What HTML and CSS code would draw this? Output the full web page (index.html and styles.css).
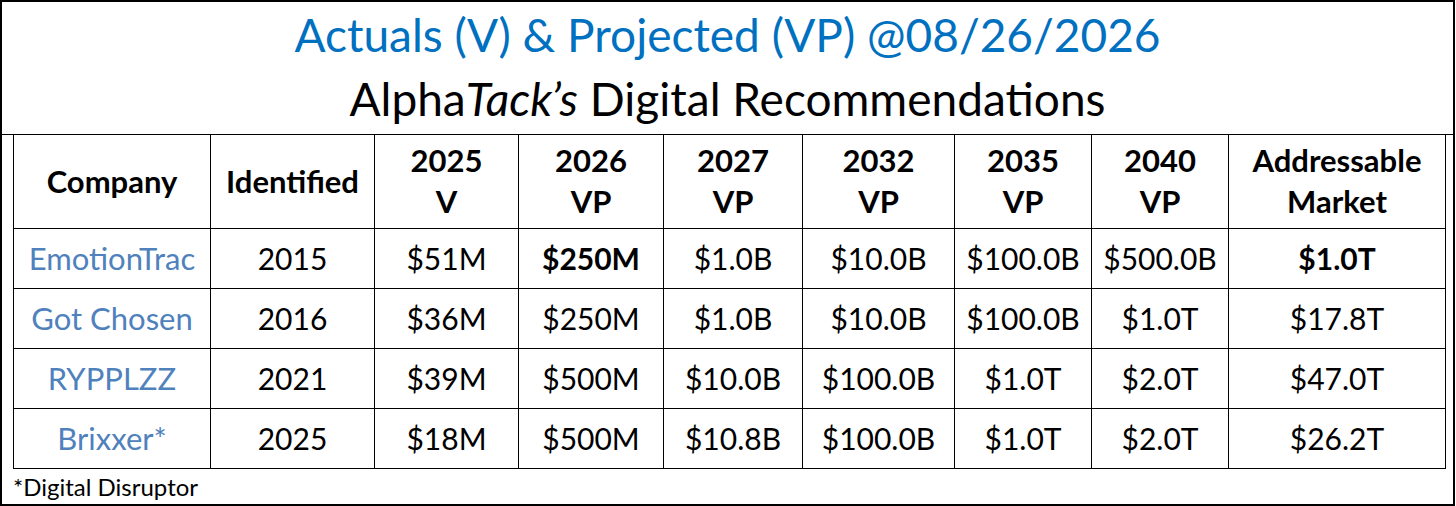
FILE: index.html
```html
<!DOCTYPE html>
<html lang="en">
<head>
<meta charset="utf-8">
<title>AlphaTack's Digital Recommendations</title>
<link rel="stylesheet" href="styles.css">
</head>
<body>
<div class="sheet">
  <header class="heading">
    <div class="title">Actuals (V) &amp; Projected (VP) @08/26/2026</div>
    <div class="subtitle">Alpha<em>Tack’s</em> Digital Recommendations</div>
  </header>
  <table class="grid">
    <colgroup>
      <col class="c-company">
      <col class="c-ident">
      <col class="c-2025">
      <col class="c-2026">
      <col class="c-2027">
      <col class="c-2032">
      <col class="c-2035">
      <col class="c-2040">
      <col class="c-market">
    </colgroup>
    <thead>
      <tr class="head-row">
        <th>Company</th>
        <th>Identified</th>
        <th>2025<br>V</th>
        <th>2026<br>VP</th>
        <th>2027<br>VP</th>
        <th>2032<br>VP</th>
        <th>2035<br>VP</th>
        <th>2040<br>VP</th>
        <th>Addressable<br>Market</th>
      </tr>
    </thead>
    <tbody>
      <tr>
        <td class="co">EmotionTrac</td>
        <td>2015</td>
        <td>$51M</td>
        <td class="strong">$250M</td>
        <td>$1.0B</td>
        <td>$10.0B</td>
        <td>$100.0B</td>
        <td>$500.0B</td>
        <td class="strong">$1.0T</td>
      </tr>
      <tr>
        <td class="co">Got Chosen</td>
        <td>2016</td>
        <td>$36M</td>
        <td>$250M</td>
        <td>$1.0B</td>
        <td>$10.0B</td>
        <td>$100.0B</td>
        <td>$1.0T</td>
        <td>$17.8T</td>
      </tr>
      <tr>
        <td class="co">RYPPLZZ</td>
        <td>2021</td>
        <td>$39M</td>
        <td>$500M</td>
        <td>$10.0B</td>
        <td>$100.0B</td>
        <td>$1.0T</td>
        <td>$2.0T</td>
        <td>$47.0T</td>
      </tr>
      <tr>
        <td class="co">Brixxer*</td>
        <td>2025</td>
        <td>$18M</td>
        <td>$500M</td>
        <td>$10.8B</td>
        <td>$100.0B</td>
        <td>$1.0T</td>
        <td>$2.0T</td>
        <td>$26.2T</td>
      </tr>
    </tbody>
  </table>
  <footer class="note">*Digital Disruptor</footer>
</div>
</body>
</html>
```
FILE: styles.css
```css
html, body {
  margin: 0;
  padding: 0;
  background: #ffffff;
}

body {
  font-family: "Lato", "Open Sans", sans-serif;
  color: #000000;
}

.sheet {
  box-sizing: border-box;
  width: 1455px;
  height: 506px;
  border: 2px solid #000000;
  display: flex;
  flex-direction: column;
}

.heading {
  box-sizing: border-box;
  height: 133px;
  border-bottom: 1px solid #000000;
  padding-top: 1px;
  text-align: center;
  font-size: 46px;
  line-height: 64px;
}

.title {
  color: #0070c0;
}

.subtitle {
  color: #000000;
}

.subtitle em {
  font-style: italic;
}

.grid {
  margin-left: 11px;
  width: 1432px;
  table-layout: fixed;
  border-collapse: collapse;
  font-size: 30px;
}

.c-company { width: 197px; }
.c-ident { width: 164px; }
.c-2025 { width: 144px; }
.c-2026 { width: 145px; }
.c-2027 { width: 139px; }
.c-2032 { width: 152px; }
.c-2035 { width: 137px; }
.c-2040 { width: 137px; }
.c-market { width: 217px; }

.grid th,
.grid td {
  border: 1px solid #000000;
  padding: 0;
  text-align: center;
  vertical-align: middle;
  white-space: nowrap;
}

.grid th {
  border-top: 0;
  font-size: 31px;
  font-weight: 700;
  line-height: 41px;
}

.head-row {
  height: 93px;
}

.grid tbody tr {
  height: 60px;
}

.grid td {
  line-height: 40px;
}

.grid td.co {
  color: #4f81bd;
  font-size: 31px;
}

.grid td.strong {
  font-weight: 700;
}

.note {
  padding-left: 11px;
  padding-top: 3px;
  font-size: 24px;
  line-height: 30px;
}
```
